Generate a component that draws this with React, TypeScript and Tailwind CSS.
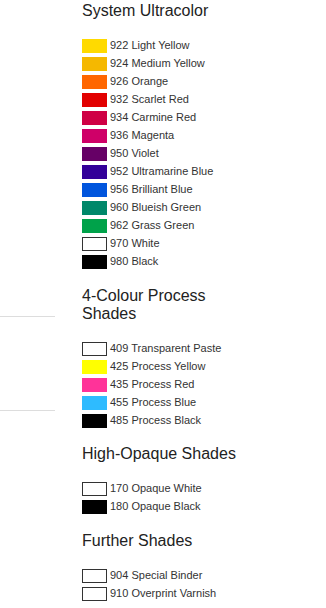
type Shade = { code: string; name: string; color: string; outline?: boolean };

const sections: { title: string[]; shades: Shade[] }[] = [
  {
    title: ["System Ultracolor"],
    shades: [
      { code: "922", name: "Light Yellow", color: "bg-[#ffda00]" },
      { code: "924", name: "Medium Yellow", color: "bg-[#f5b800]" },
      { code: "926", name: "Orange", color: "bg-[#ff6600]" },
      { code: "932", name: "Scarlet Red", color: "bg-[#e20000]" },
      { code: "934", name: "Carmine Red", color: "bg-[#cf0045]" },
      { code: "936", name: "Magenta", color: "bg-[#cf0068]" },
      { code: "950", name: "Violet", color: "bg-[#660066]" },
      { code: "952", name: "Ultramarine Blue", color: "bg-[#330099]" },
      { code: "956", name: "Brilliant Blue", color: "bg-[#0055dd]" },
      { code: "960", name: "Blueish Green", color: "bg-[#00886a]" },
      { code: "962", name: "Grass Green", color: "bg-[#00a24a]" },
      { code: "970", name: "White", color: "bg-white", outline: true },
      { code: "980", name: "Black", color: "bg-black" },
    ],
  },
  {
    title: ["4-Colour Process", "Shades"],
    shades: [
      { code: "409", name: "Transparent Paste", color: "bg-white", outline: true },
      { code: "425", name: "Process Yellow", color: "bg-[#ffff00]" },
      { code: "435", name: "Process Red", color: "bg-[#ff3399]" },
      { code: "455", name: "Process Blue", color: "bg-[#2ebbff]" },
      { code: "485", name: "Process Black", color: "bg-black" },
    ],
  },
  {
    title: ["High-Opaque Shades"],
    shades: [
      { code: "170", name: "Opaque White", color: "bg-white", outline: true },
      { code: "180", name: "Opaque Black", color: "bg-black" },
    ],
  },
  {
    title: ["Further Shades"],
    shades: [
      { code: "904", name: "Special Binder", color: "bg-white", outline: true },
      { code: "910", name: "Overprint Varnish", color: "bg-white", outline: true },
    ],
  },
];

export default function App() {
  return (
    <div className="flex min-h-[608px] w-[326px] bg-white font-['Liberation_Sans',Arial,sans-serif]">
      {/* edge of the side menu */}
      <div className="w-[55px] shrink-0 pt-[316px]">
        <div className="h-[95px] border-y border-[#dddddd]" />
      </div>

      <div className="ml-[27px] flex flex-col pt-[2px]">
        {sections.map((section, i) => (
          <section key={i} className={i === 0 ? "" : "mt-[13.5px]"}>
            <h2 className="text-[16px] leading-[18.4px] text-[#222222]">
              {section.title.map((line) => (
                <div key={line}>{line}</div>
              ))}
            </h2>
            <ul className="mt-[18.6px]">
              {section.shades.map((s) => (
                <li key={s.code} className="flex h-[18px] items-start">
                  <span
                    className={`h-[14px] w-[25px] shrink-0 ${s.color} ${
                      s.outline ? "border border-[#333333]" : ""
                    }`}
                  />
                  <span className="ml-[3px] text-[11px] leading-[13px] text-[#333333]">
                    {s.code} {s.name}
                  </span>
                </li>
              ))}
            </ul>
          </section>
        ))}
      </div>
    </div>
  );
}
